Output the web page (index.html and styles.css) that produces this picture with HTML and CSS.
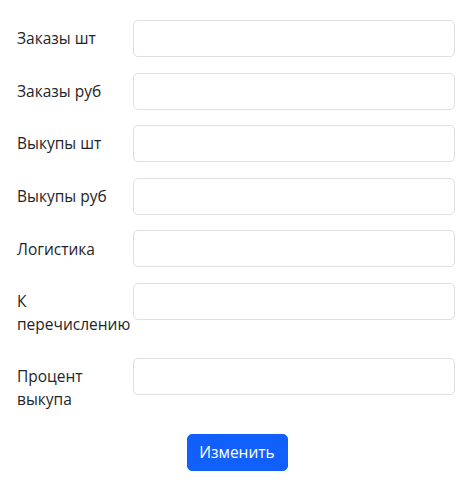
FILE: index.html
```html
<!DOCTYPE html>
<html lang="ru">
<head>
<meta charset="utf-8">
<title>Форма</title>
<link rel="stylesheet" href="styles.css">
</head>
<body>
<form class="form">
  <div class="row"><label class="label" for="f1">Заказы шт</label><input class="field" id="f1" type="text"></div>
  <div class="row"><label class="label" for="f2">Заказы руб</label><input class="field" id="f2" type="text"></div>
  <div class="row"><label class="label" for="f3">Выкупы шт</label><input class="field" id="f3" type="text"></div>
  <div class="row"><label class="label" for="f4">Выкупы руб</label><input class="field" id="f4" type="text"></div>
  <div class="row"><label class="label" for="f5">Логистика</label><input class="field" id="f5" type="text"></div>
  <div class="row"><label class="label" for="f6">К перечислению</label><input class="field" id="f6" type="text"></div>
  <div class="row"><label class="label" for="f7">Процент выкупа</label><input class="field" id="f7" type="text"></div>
  <div class="actions"><button class="btn" type="button">Изменить</button></div>
</form>
</body>
</html>
```

FILE: styles.css
```css
html, body {
  margin: 0;
  padding: 0;
  background: #fff;
}
body {
  font-family: "Open Sans", "Noto Sans", sans-serif;
  font-size: 15.5px;
  line-height: 22.5px;
  color: #222529;
}
.form {
  padding: 20px 19px 0 17px;
}
.row {
  display: grid;
  grid-template-columns: 116px 1fr;
  align-items: start;
  margin-bottom: 15.6px;
}
.label {
  padding: 7.25px 0;
  line-height: 22.5px;
}
.field {
  box-sizing: border-box;
  display: block;
  width: 100%;
  height: 37px;
  margin: 0;
  padding: 6.25px 11px;
  font: inherit;
  border: 1px solid #dcdfe3;
  border-radius: 5px;
  background: #fff;
}
.actions {
  display: flex;
  justify-content: center;
  padding-top: 1px;
  margin-left: -17px;
  margin-right: -19px;
}
.btn {
  box-sizing: border-box;
  width: 101px;
  height: 37px;
  padding: 0;
  font: inherit;
  color: #fff;
  background: #1260fc;
  border: 1px solid #1260fc;
  border-radius: 5px;
}
```
